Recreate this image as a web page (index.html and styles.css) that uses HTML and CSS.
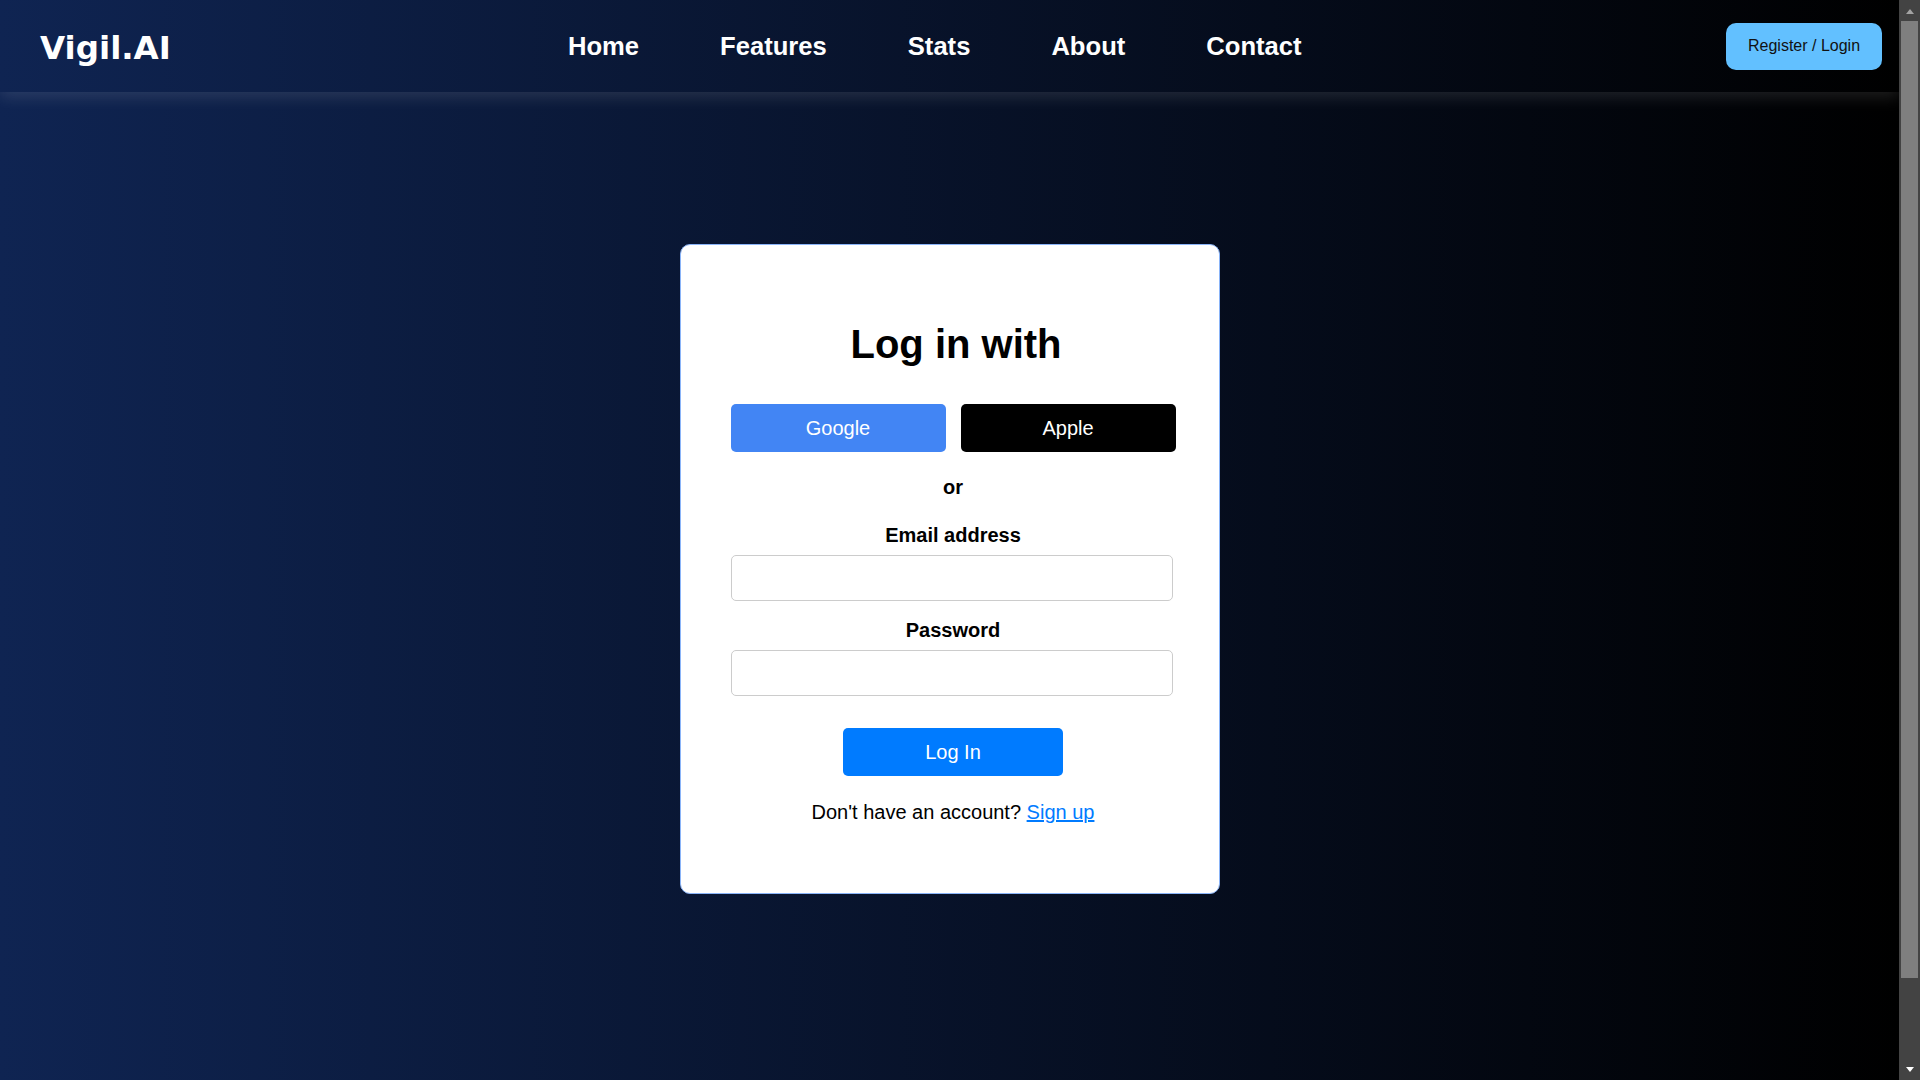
FILE: index.html
```html
<!DOCTYPE html>
<html lang="en">
<head>
<meta charset="utf-8">
<title>Vigil.AI - Log in</title>
<link rel="stylesheet" href="styles.css">
</head>
<body>
<div class="page-wrap">
  <header class="site-header">
    <div class="logo">Vigil.AI</div>
    <nav class="main-nav">
      <a href="#" class="nav-link">Home</a>
      <a href="#" class="nav-link">Features</a>
      <a href="#" class="nav-link">Stats</a>
      <a href="#" class="nav-link">About</a>
      <a href="#" class="nav-link">Contact</a>
    </nav>
    <div class="header-actions">
      <button class="register-btn" type="button">Register / Login</button>
    </div>
  </header>
  <main class="page">
    <section class="login-card">
      <h2 class="login-title">Log in with</h2>
      <div class="social-row">
        <button class="social-btn google" type="button">Google</button>
        <button class="social-btn apple" type="button">Apple</button>
      </div>
      <p class="or-text">or</p>
      <form class="login-form">
        <label class="field-label" for="email">Email address</label>
        <input class="field-input" id="email" type="email">
        <label class="field-label second" for="password">Password</label>
        <input class="field-input" id="password" type="password">
        <button class="submit-btn" type="button">Log In</button>
      </form>
      <p class="signup-text">Don't have an account? <a href="#" class="signup-link">Sign up</a></p>
    </section>
  </main>
</div>
<div class="scrollbar" aria-hidden="true">
  <div class="sb-button"><span class="sb-arrow-up"></span></div>
  <div class="sb-track"><div class="sb-thumb"></div></div>
  <div class="sb-button"><span class="sb-arrow-down"></span></div>
</div>
</body>
</html>
```

FILE: styles.css
```css
html, body {
  margin: 0;
  padding: 0;
}

body {
  display: flex;
  align-items: flex-start;
  background: #000;
  font-family: "Liberation Sans", Arial, sans-serif;
  color: #000;
}

.page-wrap {
  flex: 1;
  min-width: 0;
  min-height: 1180px;
  background: linear-gradient(to right, #0f2452 0%, #000000 100%);
}

/* fake browser scrollbar (dark) */
.scrollbar {
  width: 21px;
  height: 100vh;
  flex: none;
  display: flex;
  flex-direction: column;
  background: #434343;
}

.sb-button {
  height: 21px;
  flex: none;
  display: flex;
  align-items: center;
  justify-content: center;
}

.sb-arrow-up {
  width: 0;
  height: 0;
  border-left: 4.5px solid transparent;
  border-right: 4.5px solid transparent;
  border-bottom: 5px solid #a3a3a3;
  margin-top: 1px;
}

.sb-arrow-down {
  width: 0;
  height: 0;
  border-left: 4.5px solid transparent;
  border-right: 4.5px solid transparent;
  border-top: 5px solid #ffffff;
}

.sb-track {
  flex: 1;
  padding: 0 2px;
}

.sb-thumb {
  height: 957px;
  background: #7f7f7f;
}

.site-header {
  height: 92px;
  box-sizing: border-box;
  display: grid;
  grid-template-columns: 528px auto 1fr;
  align-items: center;
  padding: 0 17px 0 40px;
  box-shadow: 0 5px 15px rgba(255, 255, 255, 0.12);
}

.logo {
  font-family: "DejaVu Sans", Verdana, sans-serif;
  font-weight: bold;
  font-size: 32.5px;
  color: #fff;
  margin-top: 3px;
}

.main-nav {
  display: flex;
  gap: 81px;
}

.nav-link {
  color: #fff;
  text-decoration: none;
  font-weight: bold;
  font-size: 25.6px;
}

.header-actions {
  display: flex;
  justify-content: flex-end;
}

.register-btn {
  font-family: "Liberation Sans", Arial, sans-serif;
  font-size: 16px;
  color: #111;
  background: #62c0ff;
  border: none;
  border-radius: 10px;
  width: 156px;
  height: 47px;
  padding: 0;
}

.page {
  padding-top: 152px;
}

.login-card {
  width: 540px;
  box-sizing: border-box;
  margin: 0 auto;
  background: #fff;
  border: 1px solid #8ab4f8;
  border-radius: 10px;
  padding: 76px 43px 69px 50px;
  text-align: center;
}

.login-title {
  margin: 0 0 37px;
  padding-left: 6px;
  font-size: 40px;
  line-height: 46px;
  font-weight: bold;
}

.social-row {
  display: flex;
  gap: 15px;
}

.social-btn {
  flex: 1;
  height: 48px;
  border: none;
  border-radius: 5px;
  color: #fff;
  font-family: "Liberation Sans", Arial, sans-serif;
  font-size: 20px;
  padding: 0;
}

.social-btn.google {
  background: #4285f4;
}

.social-btn.apple {
  background: #000;
}

.or-text {
  margin: 24px 0 0;
  font-size: 20px;
  line-height: 23px;
  font-weight: bold;
}

.login-form {
  display: flex;
  flex-direction: column;
  align-items: stretch;
  margin: 25px 0 0;
}

.field-label {
  font-size: 20px;
  line-height: 23px;
  font-weight: bold;
  margin-bottom: 8px;
}

.field-label.second {
  margin-top: 18px;
}

.field-input {
  width: 442px;
  height: 46px;
  box-sizing: border-box;
  border: 1px solid #ccc;
  border-radius: 5px;
  background: #fff;
  color: #000;
  padding: 0 10px;
  font-size: 16px;
}

.submit-btn {
  align-self: center;
  margin-top: 32px;
  width: 220px;
  height: 48px;
  border: none;
  border-radius: 5px;
  background: #007bff;
  color: #fff;
  font-family: "Liberation Sans", Arial, sans-serif;
  font-size: 20px;
  padding: 0;
}

.signup-text {
  margin: 25px 0 0;
  font-size: 20px;
  line-height: 23px;
  color: #000;
}

.signup-link {
  color: #007bff;
  text-decoration: underline;
}
```
